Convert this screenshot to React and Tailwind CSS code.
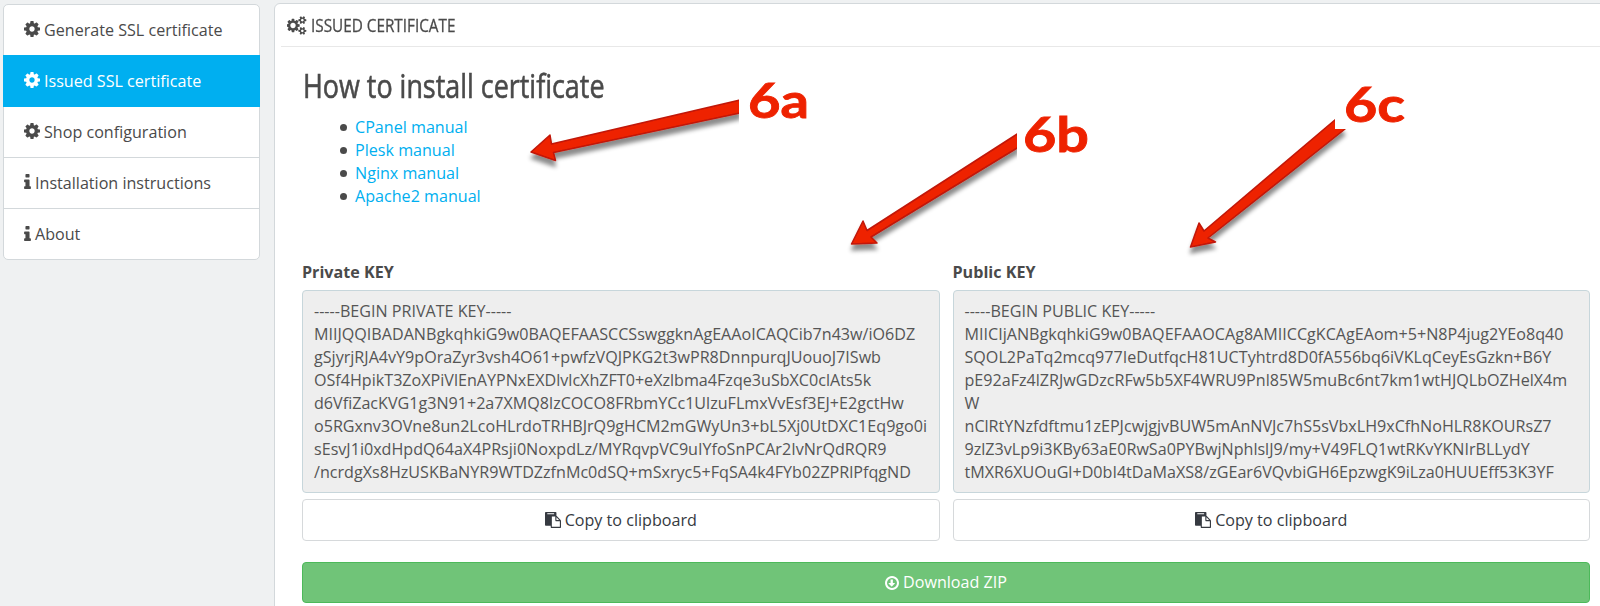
import React from "react";

const PATHS = {
  cog: {
    box: "128 128 1536 1536",
    d: "M1152 896q0-106-75-181t-181-75-181 75-75 181 75 181 181 75 181-75 75-181zm512-109v222q0 12-8 23t-20 13l-185 28q-19 54-39 91 35 50 107 138 10 12 10 25t-9 23q-27 37-99 108t-94 71q-12 0-26-9l-138-108q-44 23-91 38-16 136-29 186-7 28-36 28h-222q-14 0-24.5-8.5t-11.5-21.5l-28-184q-49-16-90-37l-141 107q-10 9-25 9-14 0-25-11-126-114-165-168-7-10-7-23 0-12 8-23 15-21 51-66.5t54-70.5q-27-50-41-99l-183-27q-13-2-21-12.5t-8-23.5v-222q0-12 8-23t19-13l186-28q14-46 39-92-40-57-107-138-10-12-10-24 0-10 9-23 26-36 98.5-107.5t94.5-71.5q13 0 26 10l138 107q44-23 91-38 16-136 29-186 7-28 36-28h222q14 0 24.5 8.5t11.5 21.5l28 184q49 16 90 37l142-107q9-9 24-9 13 0 25 10 129 119 165 170 7 8 7 22 0 12-8 23-15 21-51 66.5t-54 70.5q26 50 41 98l183 28q13 2 21 12.5t8 23.5z",
  },
  cogs: {
    box: "0 0 1920 1792",
    d: "M832 896q0-106-75-181t-181-75-181 75-75 181 75 181 181 75 181-75 75-181zm768 512q0-52-38-90t-90-38-90 38-38 90q0 53 37.5 90.5t90.5 37.5 90.5-37.5 37.5-90.5zm0-1024q0-52-38-90t-90-38-90 38-38 90q0 53 37.5 90.5t90.5 37.5 90.5-37.5 37.5-90.5zm-384 421v185q0 10-7 19.5t-16 10.5l-155 24q-11 35-32 76 34 48 90 115 7 11 7 20 0 12-7 19-23 30-82.5 89.5t-78.5 59.5q-11 0-21-7l-115-90q-37 19-77 31-11 108-23 155-7 24-30 24h-186q-11 0-20-7.5t-10-17.5l-23-153q-34-10-75-31l-118 89q-7 7-20 7-11 0-21-8-144-133-144-160 0-9 7-19 10-14 41-53t47-61q-23-44-35-82l-152-24q-10-1-17-9.5t-7-19.5v-185q0-10 7-19.5t16-10.5l155-24q11-35 32-76-34-48-90-115-7-11-7-20 0-12 7-20 22-30 82-89t79-59q11 0 21 7l115 90q34-18 77-32 11-108 23-154 7-24 30-24h186q11 0 20 7.5t10 17.5l23 153q34 10 75 31l118-89q8-7 20-7 11 0 21 8 144 133 144 160 0 8-7 19-12 16-42 54t-45 60q23 48 34 82l152 23q10 2 17 10.5t7 19.5zm640 533v140q0 16-149 31-12 27-30 52 51 113 51 138 0 4-4 7-122 71-124 71-8 0-46-47t-52-68q-20 2-30 2t-30-2q-14 21-52 68t-46 47q-2 0-124-71-4-3-4-7 0-25 51-138-18-25-30-52-149-15-149-31v-140q0-16 149-31 13-29 30-52-51-113-51-138 0-4 4-7 4-2 35-20t59-34 30-16q8 0 46 46.5t52 67.5q20-2 30-2t30 2q51-71 92-112l6-2q4 0 124 70 4 3 4 7 0 25-51 138 17 23 30 52 149 15 149 31zm0-1024v140q0 16-149 31-12 27-30 52 51 113 51 138 0 4-4 7-122 71-124 71-8 0-46-47t-52-68q-20 2-30 2t-30-2q-14 21-52 68t-46 47q-2 0-124-71-4-3-4-7 0-25 51-138-18-25-30-52-149-15-149-31v-140q0-16 149-31 13-29 30-52-51-113-51-138 0-4 4-7 4-2 35-20t59-34 30-16q8 0 46 46.5t52 67.5q20-2 30-2t30 2q51-71 92-112l6-2q4 0 124 70 4 3 4 7 0 25-51 138 17 23 30 52 149 15 149 31z",
  },
  info: {
    box: "576 128 640 1408",
    d: "M1216 1344v128q0 26-19 45t-45 19h-512q-26 0-45-19t-19-45v-128q0-26 19-45t45-19h64v-384h-64q-26 0-45-19t-19-45v-128q0-26 19-45t45-19h384q26 0 45 19t19 45v576h64q26 0 45 19t19 45zm-128-1152v192q0 26-19 45t-45 19h-256q-26 0-45-19t-19-45v-192q0-26 19-45t45-19h256q26 0 45 19t19 45z",
  },
  paste: {
    box: "0 0 1792 1792",
    d: "M768 1664h896v-640h-416q-40 0-68-28t-28-68v-416h-384v1152zm256-1440v-64q0-13-9.5-22.5t-22.5-9.5h-704q-13 0-22.5 9.5t-9.5 22.5v64q0 13 9.5 22.5t22.5 9.5h704q13 0 22.5-9.5t9.5-22.5zm256 672h299l-299-299v299zm512 128v672q0 40-28 68t-68 28h-960q-40 0-68-28t-28-68v-160h-544q-40 0-68-28t-28-68v-1344q0-40 28-68t68-28h1088q40 0 68 28t28 68v328q21 13 36 28l408 408q28 28 48 76t20 88z",
  },
  download: {
    box: "128 128 1536 1536",
    d: "M1216 928q0 14-10 24l-319 319q-10 9-23 9t-23-9l-320-320q-9-9-9-23 0-13 9.5-22.5t22.5-9.5h192v-352q0-13 9.5-22.5t22.5-9.5h192q13 0 22.5 9.5t9.5 22.5v352h192q14 0 23 9t9 23zm-320-576q-148 0-273 73t-198 198-73 273 73 273 198 198 273 73 273-73 198-198 73-273-73-273-198-198-273-73zm768 544q0 209-103 385.5t-279.5 279.5-385.5 103-385.5-103-279.5-279.5-103-385.5 103-385.5 279.5-279.5 385.5-103 385.5 103 279.5 279.5 103 385.5z",
  },
};

function Icon({ name, className }) {
  const { box, d } = PATHS[name];
  return (
    <svg viewBox={box} fill="currentColor" className={`shrink-0 ${className}`} aria-hidden="true">
      <path d={d} />
    </svg>
  );
}

const MENU = [
  { label: "Generate SSL certificate", icon: "cog" },
  { label: "Issued SSL certificate", icon: "cog", active: true },
  { label: "Shop configuration", icon: "cog" },
  { label: "Installation instructions", icon: "info" },
  { label: "About", icon: "info" },
];

const MANUALS = ["CPanel manual", "Plesk manual", "Nginx manual", "Apache2 manual"];

const PRIVATE_KEY = [
  "-----BEGIN PRIVATE KEY-----",
  "MIIJQQIBADANBgkqhkiG9w0BAQEFAASCCSswggknAgEAAoICAQCib7n43w/iO6DZ",
  "gSjyrjRJA4vY9pOraZyr3vsh4O61+pwfzVQJPKG2t3wPR8DnnpurqJUouoJ7ISwb",
  "OSf4HpikT3ZoXPiVlEnAYPNxEXDlvlcXhZFT0+eXzlbma4Fzqe3uSbXC0clAts5k",
  "d6VfiZacKVG1g3N91+2a7XMQ8lzCOCO8FRbmYCc1UlzuFLmxVvEsf3EJ+E2gctHw",
  "o5RGxnv3OVne8un2LcoHLrdoTRHBJrQ9gHCM2mGWyUn3+bL5Xj0UtDXC1Eq9go0i",
  "sEsvJ1i0xdHpdQ64aX4PRsji0NoxpdLz/MYRqvpVC9uIYfoSnPCAr2IvNrQdRQR9",
  "/ncrdgXs8HzUSKBaNYR9WTDZzfnMc0dSQ+mSxryc5+FqSA4k4FYb02ZPRlPfqgND",
];

const PUBLIC_KEY = [
  "-----BEGIN PUBLIC KEY-----",
  "MIICIjANBgkqhkiG9w0BAQEFAAOCAg8AMIICCgKCAgEAom+5+N8P4jug2YEo8q40",
  "SQOL2PaTq2mcq977IeDutfqcH81UCTyhtrd8D0fA556bq6iVKLqCeyEsGzkn+B6Y",
  "pE92aFz4lZRJwGDzcRFw5b5XF4WRU9Pnl85W5muBc6nt7km1wtHJQLbOZHelX4m",
  "W",
  "nClRtYNzfdftmu1zEPJcwjgjvBUW5mAnNVJc7hS5sVbxLH9xCfhNoHLR8KOURsZ7",
  "9zlZ3vLp9i3KBy63aE0RwSa0PYBwjNphlslJ9/my+V49FLQ1wtRKvYKNIrBLLydY",
  "tMXR6XUOuGl+D0bI4tDaMaXS8/zGEar6VQvbiGH6EpzwgK9iLza0HUUEff53K3YF",
];

function KeyBlock({ title, lines }) {
  return (
    <section className="flex min-w-0 flex-1 flex-col">
      <h3 className="h-[29px] text-[16.12px] leading-[23px] font-bold">{title}</h3>
      <div className="h-[203px] overflow-hidden rounded-[4px] border-[1.5px] border-[#c7d6db] bg-[#eeeeee] px-[11px] pt-[9px] text-[#555]">
        {lines.map((line) => (
          <p key={line} className="h-[23px] text-[16.12px] leading-[23px] whitespace-nowrap">
            {line}
          </p>
        ))}
      </div>
      <button className="mt-[6px] flex h-[42px] items-center justify-center gap-[4px] rounded-[4px] border border-[#d6d9db] bg-white text-[16.12px] text-[#363a41]">
        <Icon name="paste" className="h-[16px] w-[16px]" />
        Copy to clipboard
      </button>
    </section>
  );
}

const ARROWS = [
  "M531 152 L550 135 L551.5 144 L740 100 L740 113 L553.5 152.5 L555.5 160.5 Z",
  "M851.5 244 L863 221 L867 230.5 L1018 133.5 L1018 147.5 L871 237 L877 243 Z",
  "M1190.5 247 L1199 223 L1204 231 L1336 119 L1345 129 L1208 238 L1215.5 242 Z",
];

export default function App() {
  return (
    <div className="relative flex h-[606px] w-[1600px] overflow-hidden bg-[#eff1f2] font-['Open_Sans','Noto_Sans',sans-serif] text-[#4a4a4a]">
      <nav className="mt-[4px] ml-[3px] flex h-[256px] w-[257px] shrink-0 flex-col rounded-[5px] border border-[#d3d8db] bg-white text-[16.12px]">
        {MENU.map((item) => (
          <a
            key={item.label}
            className={
              item.active
                ? "-mx-px flex h-[52px] shrink-0 items-center gap-[4px] bg-[#00aff0] pl-[21px] text-white"
                : "flex h-[51px] shrink-0 items-center gap-[4px] border-b border-[#d3d8db] pl-[20px] first:h-[50px] first:border-b-0 last:border-b-0"
            }
          >
            <Icon name={item.icon} className={item.icon === "cog" ? "-mt-[2px] h-[16px] w-[16px]" : "-mt-[3px] h-[15px] w-[7px]"} />
            {item.label}
          </a>
        ))}
      </nav>

      <main className="mt-[3px] ml-[14px] h-[640px] w-[1360px] shrink-0 rounded-[6px] border-[1.5px] border-[#d3d8db] bg-white">
        <header className="ml-[6px] flex h-[43px] items-center border-b border-[#e8e8e8] pl-[6px]">
          <Icon name="cogs" className="h-[19px] w-[20px]" />
          <h1 className="ml-[4px] origin-left scale-x-[0.805] text-[19px] leading-[24px] whitespace-nowrap [-webkit-text-stroke:0.3px_#4a4a4a]">ISSUED CERTIFICATE</h1>
        </header>

        <div className="w-[1315px] pl-[28px]">
          <h2 className="mt-[19px] h-[40px] origin-left scale-x-[0.815] text-[33px] leading-[40px] whitespace-nowrap [-webkit-text-stroke:0.6px_#4a4a4a]">How to install certificate</h2>
          <ul className="mt-[10px] flex flex-col pl-[36px]">
            {MANUALS.map((m) => (
              <li key={m} className="flex h-[23px] items-center gap-[8px] text-[16.12px] text-[#00aff0]">
                <span className="ml-px h-[7px] w-[7px] rounded-full bg-[#4a4a4a]" />
                <a>{m}</a>
              </li>
            ))}
          </ul>

          <div className="-ml-px mt-[53px] flex gap-[13px]">
            <KeyBlock title="Private KEY" lines={PRIVATE_KEY} />
            <KeyBlock title="Public KEY" lines={PUBLIC_KEY} />
          </div>

          <div className="-ml-px mt-[21px] flex">
            <button className="flex h-[41px] flex-1 items-center justify-center gap-[4px] rounded-[4px] border border-[#4cb95a] bg-[#70c478] text-[16.12px] text-white">
              <Icon name="download" className="h-[14px] w-[14px]" />
              Download ZIP
            </button>
          </div>
        </div>
      </main>

      <svg className="pointer-events-none absolute inset-0" width="1600" height="606" viewBox="0 0 1600 606" aria-hidden="true">
        <defs>
          <filter id="shadow" x="-20%" y="-20%" width="140%" height="150%">
            <feDropShadow dx="0" dy="6" stdDeviation="2.2" floodColor="#000" floodOpacity="0.45" />
          </filter>
        </defs>
        {ARROWS.map((d) => (
          <path key={d} d={d} fill="#ee2200" stroke="#c01808" strokeWidth="1.5" strokeLinejoin="round" filter="url(#shadow)" />
        ))}
        <rect x="739" y="78" width="72" height="54" fill="#fff" />
        <rect x="1017" y="108" width="76" height="52" fill="#fff" />
        <rect x="1335" y="84" width="72" height="45" fill="#fff" />
        <g fill="#ee2200" fontFamily="Lato, sans-serif" fontWeight="700" fontSize="48" stroke="#ee2200" strokeWidth="0.8">
          <text x="748" y="117.5" textLength="61" lengthAdjust="spacingAndGlyphs">6a</text>
          <text x="1023" y="152" textLength="66" lengthAdjust="spacingAndGlyphs">6b</text>
          <text x="1344" y="122" textLength="61" lengthAdjust="spacingAndGlyphs">6c</text>
        </g>
      </svg>
    </div>
  );
}
